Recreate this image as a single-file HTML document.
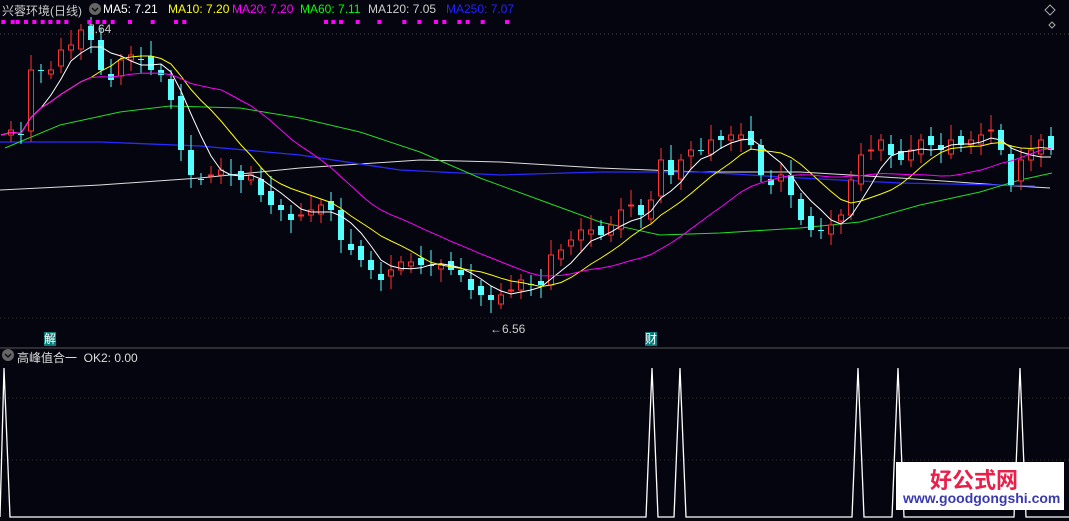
<!DOCTYPE html>
<html><head><meta charset="utf-8"><style>
html,body{margin:0;padding:0;background:#05050f;width:1069px;height:521px;overflow:hidden;font-family:"Liberation Sans","Noto Sans CJK SC",sans-serif}
.t{position:absolute;font-size:12px;white-space:nowrap}
</style></head><body>
<svg id="s" width="1069" height="521" style="position:absolute;left:0;top:0">
<line x1="0" y1="34" x2="1069" y2="34" stroke="#444" stroke-dasharray="1,3"/>
<line x1="0" y1="318" x2="1069" y2="318" stroke="#333" stroke-dasharray="1,3"/>
<line x1="0" y1="348" x2="1069" y2="348" stroke="#555"/>
<line x1="0" y1="398" x2="1069" y2="398" stroke="#333" stroke-dasharray="1,3"/>
<line x1="0" y1="460" x2="1069" y2="460" stroke="#333" stroke-dasharray="1,3"/>
<polyline fill="none" stroke="#ddd" stroke-width="1" points="0,190 100,185 200,178 300,168 420,160 500,162 600,168 700,172 800,172 900,178 1000,185 1050,188"/>
<polyline fill="none" stroke="#2a2aff" stroke-width="1.3" points="0,142 100,142 200,146 300,155 400,170 500,175 600,172 700,172 800,178 900,183 1000,185 1035,186"/>
<polyline fill="none" stroke="#22dd22" stroke-width="1" points="5,148 60,125 120,112 170,106 240,108 300,118 360,132 420,152 480,178 540,200 600,222 660,235 720,233 800,228 860,222 920,205 980,192 1020,180 1052,173"/>
<polyline fill="none" stroke="#fff" stroke-width="1.3" points="0,517 4,368 10,517 646,517 652,368 658,517 674,517 680,368 686,517 852,517 858,368 864,517 892,517 898,368 904,517 1014,517 1020,368 1026,517 1069,517"/>
<rect x="896" y="462" width="168" height="48" fill="#fff"/>
<path d="M1050,5 l5,5 l-5,5 l-5,-5z" fill="none" stroke="#aaa"/>
<path d="M1052,22 l3,3 l-3,3 l-3,-3z" fill="none" stroke="#aaa"/>
<circle cx="8" cy="355" r="6" fill="#666"/><path d="M5,354 l3,3 l3,-3" stroke="#111" fill="none" stroke-width="1.5"/>
<circle cx="95" cy="9" r="6" fill="#666"/><path d="M92,8 l3,3 l3,-3" stroke="#111" fill="none" stroke-width="1.5"/>
<g id="c"></g>
</svg>
<div class="t" style="left:2px;top:2px;color:#ccc">兴蓉环境(日线)</div>
<div class="t" style="left:103px;top:2px;color:#fff">MA5: 7.21</div>
<div class="t" style="left:168px;top:2px;color:#ff0">MA10: 7.20</div>
<div class="t" style="left:232px;top:2px;color:#f0f">MA20: 7.20</div>
<div class="t" style="left:300px;top:2px;color:#0f0">MA60: 7.11</div>
<div class="t" style="left:368px;top:2px;color:#ccc">MA120: 7.05</div>
<div class="t" style="left:446px;top:2px;color:#22f">MA250: 7.07</div>
<div class="t" style="left:88px;top:22px;color:#ccc;font-size:12px">7.64</div>
<div class="t" style="left:490px;top:322px;color:#ccc;font-size:12px">←6.56</div>
<div class="t" style="left:44px;top:332px;background:#087a78;color:#fff;font-size:12px;line-height:14px">解</div>
<div class="t" style="left:645px;top:332px;background:#087a78;color:#fff;font-size:12px;line-height:14px">财</div>
<div class="t" style="left:17px;top:349px;color:#ddd">高峰值合一 &nbsp;OK2: 0.00</div>
<div class="t" style="left:930px;top:463px;color:#e8204a;font-size:22px;font-weight:bold">好公式网</div>
<div class="t" style="left:903px;top:490px;color:#3a3ab0;font-size:14px;font-weight:bold">www.goodgongshi.com</div>
<script>
var Y=[135,130,135,70,70,70,50,45,30,40,70,80,60,55,60,70,75,100,150,175,180,175,170,175,180,175,195,205,210,220,215,210,205,210,240,250,260,270,280,270,262,262,265,265,265,270,275,290,295,300,295,290,280,285,285,255,250,240,230,230,235,225,210,205,215,200,160,175,160,150,150,140,140,135,135,145,175,185,175,195,220,230,230,225,215,180,155,150,140,155,160,150,140,145,150,140,145,140,135,130,150,185,160,150,140,150];
var g='';
for(var i=1;i<Y.length;i++){var x=i*10-2,o=Y[i-1]+(i%3-1)*4,c=Y[i];var t=Math.min(o,c),b=Math.max(o,c),h=Math.max(b-t,1);
var up=c<o,col=up?'#ff3232':'#54ffff';
g+='<line x1="'+(x+3)+'" x2="'+(x+3)+'" y1="'+(t-6-(i%4)*3)+'" y2="'+(b+5+(i%5)*2)+'" stroke="'+col+'"/>';
g+= up?'<rect x="'+(x+0.5)+'" y="'+t+'" width="5" height="'+h+'" fill="#05050f" stroke="'+col+'"/>':'<rect x="'+x+'" y="'+t+'" width="6" height="'+h+'" fill="'+col+'"/>';}
function ma(n,cl){var p=[];for(var i=0;i<Y.length;i++){var s=0,k=0;for(var j=Math.max(0,i-n+1);j<=i;j++){s+=Y[j];k++;}p.push((i*10+1)+','+(s/k).toFixed(1));}return '<polyline fill="none" stroke="'+cl+'" points="'+p.join(' ')+'"/>';}
g+=ma(5,'#fff')+ma(10,'#ff0')+ma(20,'#f0f');
var d=[7,35,50,75,100,125,148,172,196,265,290,310,335,387,455,525,550,975,997,1020,1070,1135,1210,1255,1305,1330,1375,1400,1445,1518];
d.forEach(function(v){g+='<rect x="'+(v/3-1)+'" y="20" width="4" height="4" fill="#f0f"/>';});
document.getElementById('c').innerHTML=g;
</script>
</body></html>
